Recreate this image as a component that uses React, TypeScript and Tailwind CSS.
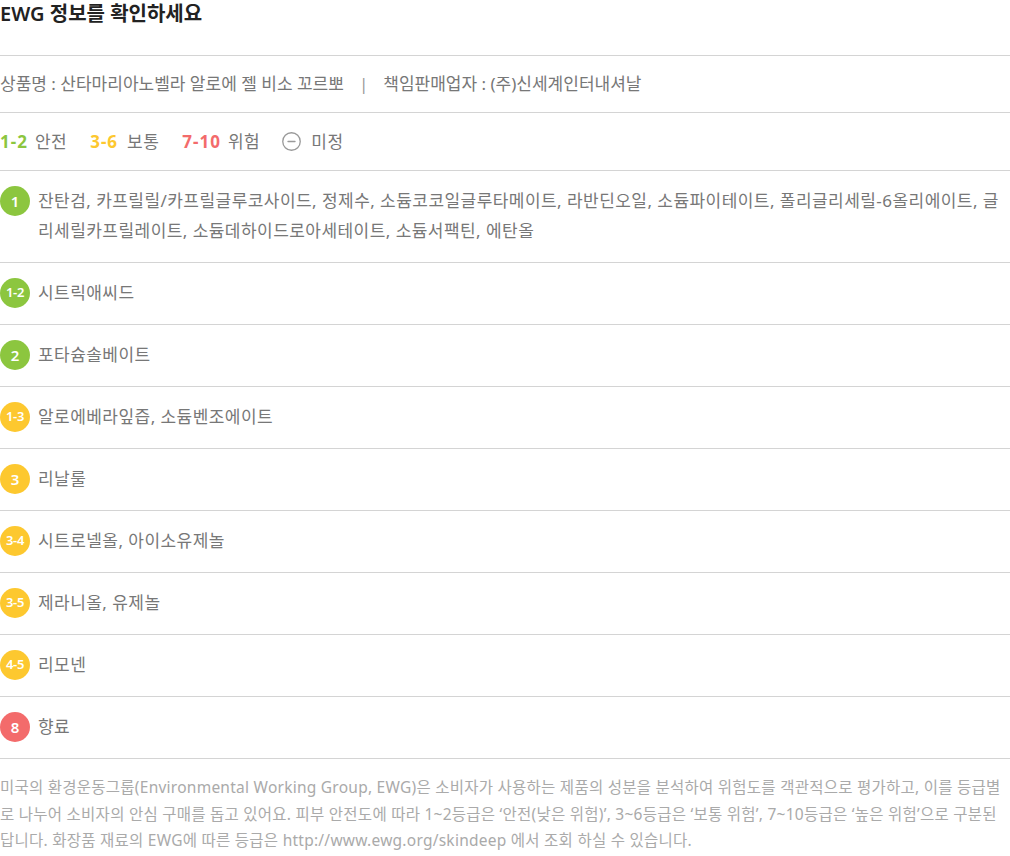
import { CircleMinus } from "lucide-react";

type Ingredient = {
  grade: string;
  color: string;
  names: string;
};

const ingredients: Ingredient[] = [
  {
    grade: "1",
    color: "bg-[#8cc63f]",
    names:
      "잔탄검, 카프릴릴/카프릴글루코사이드, 정제수, 소듐코코일글루타메이트, 라반딘오일, 소듐파이테이트, 폴리글리세릴-6올리에이트, 글리세릴카프릴레이트, 소듐데하이드로아세테이트, 소듐서팩틴, 에탄올",
  },
  { grade: "1-2", color: "bg-[#8cc63f]", names: "시트릭애씨드" },
  { grade: "2", color: "bg-[#8cc63f]", names: "포타슘솔베이트" },
  { grade: "1-3", color: "bg-[#fdc82f]", names: "알로에베라잎즙, 소듐벤조에이트" },
  { grade: "3", color: "bg-[#fdc82f]", names: "리날룰" },
  { grade: "3-4", color: "bg-[#fdc82f]", names: "시트로넬올, 아이소유제놀" },
  { grade: "3-5", color: "bg-[#fdc82f]", names: "제라니올, 유제놀" },
  { grade: "4-5", color: "bg-[#fdc82f]", names: "리모넨" },
  { grade: "8", color: "bg-[#f36b6b]", names: "향료" },
];

function GradeBadge({ grade, color }: { grade: string; color: string }) {
  const small = grade.length > 1;
  return (
    <span
      className={`flex h-[30px] w-[30px] shrink-0 items-center justify-center rounded-full font-semibold text-white ${color} ${
        small ? "text-[13px] tracking-[-0.3px]" : "text-[15px]"
      }`}
    >
      {grade}
    </span>
  );
}

export default function App() {
  return (
    <div
      className="w-[1010px] bg-white text-[#777]"
      style={{ fontFamily: '"Noto Sans", "Noto Sans CJK KR", sans-serif' }}
    >
      <h2 className="h-[55px] text-[20px] font-semibold leading-[28px] text-[#222]">
        EWG 정보를 확인하세요
      </h2>

      <div className="border-t border-[#d4d4d4] py-[14px] text-[17px] leading-[28px]">
        상품명 : 산타마리아노벨라 알로에 젤 비소 꼬르뽀
        <span className="mx-[15px] text-[#999]">|</span>
        책임판매업자 : (주)신세계인터내셔날
      </div>

      <div className="flex items-center border-t border-[#d4d4d4] py-[14px] text-[17px] leading-[29px]">
        <span className="font-bold tracking-[1px] text-[#8cc63f]">1-2</span>
        <span className="ml-[7px] tracking-[0.5px]">안전</span>
        <span className="ml-[23px] font-bold tracking-[1px] text-[#fdc82f]">3-6</span>
        <span className="ml-[9px] tracking-[0.5px]">보통</span>
        <span className="ml-[23px] font-bold tracking-[1px] text-[#f36b6b]">7-10</span>
        <span className="ml-[7px] tracking-[0.5px]">위험</span>
        <CircleMinus className="ml-[21px] h-[21px] w-[21px] text-[#999]" strokeWidth={1.5} />
        <span className="ml-[9px] tracking-[0.5px]">미정</span>
      </div>

      <ul className="border-t border-[#d4d4d4]">
        {ingredients.map((item) => (
          <li
            key={item.grade + item.names}
            className="flex items-start gap-[8px] border-b border-[#d4d4d4] pt-[15px] pb-[16px]"
          >
            <GradeBadge grade={item.grade} color={item.color} />
            <p className="text-[17px] leading-[30px] tracking-[0.45px]">{item.names}</p>
          </li>
        ))}
      </ul>

      <p className="pt-[15px] text-[15.5px] leading-[26.5px] tracking-[0.25px] text-[#aaa]">
        미국의 환경운동그룹(Environmental Working Group, EWG)은 소비자가 사용하는 제품의 성분을 분석하여 위험도를 객관적으로 평가하고, 이를 등급별로 나누어 소비자의 안심 구매를 돕고 있어요. 피부 안전도에 따라 1~2등급은 ‘안전(낮은 위험)’, 3~6등급은 ‘보통 위험’, 7~10등급은 ‘높은 위험’으로 구분된답니다. 화장품 재료의 EWG에 따른 등급은 http://www.ewg.org/skindeep 에서 조회 하실 수 있습니다.
      </p>
    </div>
  );
}
